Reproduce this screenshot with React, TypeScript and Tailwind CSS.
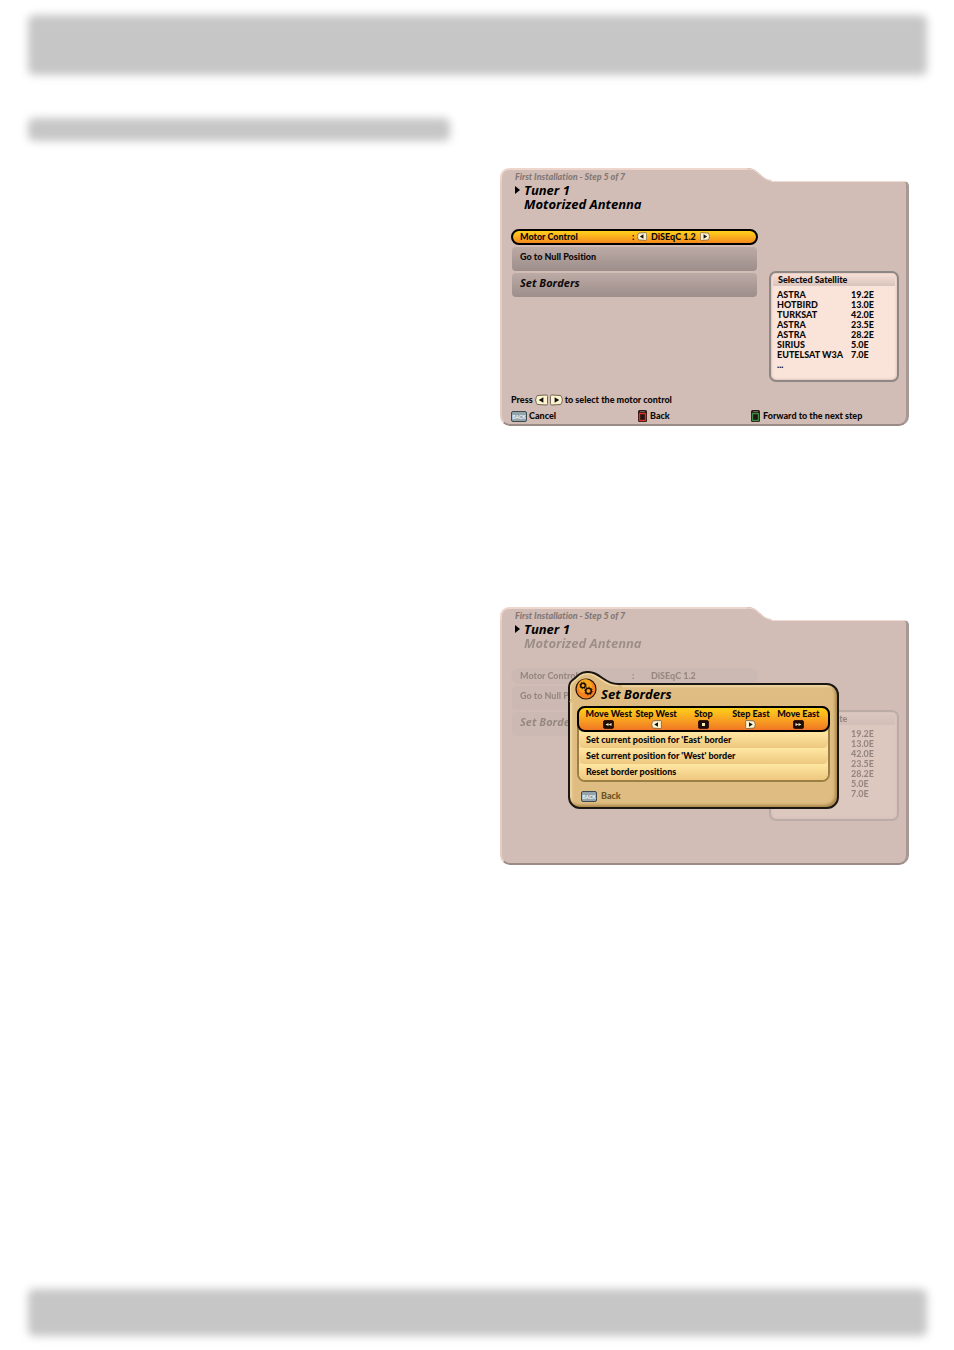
import type { ReactNode } from "react";

const satellites = [
  ["ASTRA", "19.2E"],
  ["HOTBIRD", "13.0E"],
  ["TURKSAT", "42.0E"],
  ["ASTRA", "23.5E"],
  ["ASTRA", "28.2E"],
  ["SIRIUS", "5.0E"],
  ["EUTELSAT W3A", "7.0E"],
];

function KeyIcon({ dir, className }: { dir: "left" | "right"; className: string }) {
  return (
    <svg viewBox="0 0 14 12" className={`block shrink-0 ${className}`} aria-hidden="true">
      <g transform={dir === "left" ? undefined : "matrix(-1 0 0 1 14 0)"}>
        <path d="M2.500 1.200L12 0.600q1.500 0 1.500 1.500v7.800q0 1.500-1.500 1.500L2.500 10.800Q1.200 9 0.600 6Q1.200 3 2.500 1.200z" fill="#fdf3cf" stroke="#6b5a4a" strokeWidth="1" />
        <path d="M9 3v6L4 6z" fill="#111" />
      </g>
    </svg>
  );
}

function BackKey() {
  return (
    <svg viewBox="0 0 16 11" className="block h-[11px] w-4 shrink-0" aria-hidden="true">
      <rect x="0.500" y="0.500" width="15" height="10" rx="1.500" fill="#94a4aa" stroke="#3f4b50" />
      <text x="8" y="7.500" textAnchor="middle" fontSize="5" fontWeight="700" fill="#f4f9fb">
        BACK
      </text>
    </svg>
  );
}

function ColorKey({ color }: { color: string }) {
  return (
    <svg viewBox="0 0 9 12" className="block h-3 w-[9px] shrink-0" aria-hidden="true">
      <rect x="0" y="0" width="9" height="12" rx="1.500" fill="#2a1a17" />
      <rect x="1.500" y="3.500" width="6" height="7" rx="0.500" fill="#221512" stroke={color} strokeWidth="1.400" />
      <path d="M2 1.500h5" stroke="#6d5f5a" strokeWidth="1" />
    </svg>
  );
}

function DarkKey({ kind }: { kind: "rew" | "stop" | "fwd" }) {
  return (
    <svg viewBox="0 0 11 9" className="block h-[9px] w-[11px]" aria-hidden="true">
      <rect x="0.500" y="0.500" width="10" height="8" rx="1.500" fill="#1c0d08" stroke="#3c1606" />
      {kind === "stop" && <rect x="4" y="3" width="3" height="3" fill="#fbe9c0" />}
      {kind === "rew" && <path d="M5.500 3v3L2.500 4.500zM8.500 3v3L5.500 4.500z" fill="#fbe9c0" />}
      {kind === "fwd" && <path d="M5.500 3v3l3-1.500zM2.500 3v3l3-1.500z" fill="#fbe9c0" />}
    </svg>
  );
}

function GreyBar({ className }: { className: string }) {
  return (
    <div className={`flex p-1 ${className}`}>
      <div className="flex-1 rounded-[6px] bg-[#c6c6c6] blur-[4px]" />
    </div>
  );
}

function FolderBackdrop() {
  return (
    <div className="col-start-1 row-start-1 flex flex-col">
      <div className="flex h-[13px]">
        <div className="w-[247px] rounded-tl-[9px] border-t-2 border-l-2 border-[#efd6cc] bg-[#d1bdb6]" />
        <svg viewBox="0 0 25 13" className="block h-[13px] w-[25px]" aria-hidden="true">
          <path d="M0 0C6 0 8 1.500 12 5S19 12 25 12V13H0z" fill="#d1bdb6" />
          <path d="M0 1C6 1 8 2.500 12 6S19 12.500 25 12.500" fill="none" stroke="#eed8cf" strokeWidth="1" />
        </svg>
      </div>
      <div className="flex flex-1">
        <div className="w-[271px] rounded-bl-[10px] border-b-2 border-l-2 border-b-[#9a8b87] border-l-[#e6cdc3] bg-[#d1bdb6]" />
        <div className="flex-1 rounded-tr-[5px] rounded-br-[10px] border-t border-r-3 border-b-2 border-t-[#efd9d0] border-r-[#a89995] border-b-[#9a8b87] bg-[#d1bdb6]" />
      </div>
    </div>
  );
}

function MenuRow({ dim, italic, children }: { dim: boolean; italic?: boolean; children: ReactNode }) {
  return (
    <button
      className={`mx-px flex h-6 items-center rounded-[4px] px-2 pb-1 text-left ${
        italic ? "font-['Open_Sans',sans-serif] text-[11px] font-bold italic" : "text-[9px]"
      } ${dim ? "bg-[#c2b2ad]" : "bg-linear-to-b from-[#bcaaa5] to-[#9d8e8b]"}`}
    >
      {children}
    </button>
  );
}

function SatelliteBox({ dim }: { dim: boolean }) {
  return (
    <section className="mt-[42px] h-[111px] w-[130px] rounded-[7px] border-2 border-[#8d8785] bg-[#fae4da] px-[6px] shadow-[inset_0_0_3px_#c9a79a]">
      <h3 className="-mx-1 mt-px h-3 bg-linear-to-b from-[#f7dfd5] to-[#d9c4bd] px-1 pl-[5px] text-[9px] leading-3">
        Selected Satellite
      </h3>
      <table className="mt-1 w-full text-[9px] leading-[10px]">
        <tbody>
          {satellites.map(([name, pos]) => (
            <tr key={name + pos}>
              <td className="w-[74px] p-0 whitespace-nowrap">{dim ? "" : name}</td>
              <td className="p-0">{pos}</td>
            </tr>
          ))}
          {!dim && (
            <tr>
              <td className="p-0">...</td>
            </tr>
          )}
        </tbody>
      </table>
    </section>
  );
}

function Screen({ dim = false, children }: { dim?: boolean; children?: ReactNode }) {
  return (
    <article className="relative grid min-h-[258px] w-[409px] font-['Lato',sans-serif] font-black text-[#0d0908] [font-variant-ligatures:none]">
      <FolderBackdrop />
      <div className="col-start-1 row-start-1 flex flex-col pr-[10px] pb-1 pl-[11px]">
        <header className="pt-[3px] pl-1 font-['Open_Sans',sans-serif] italic">
          <p className="font-['Lato',sans-serif] text-[9px] leading-3 font-black text-[#857874]">
            First Installation - Step 5 of 7
          </p>
          <h1 className="flex items-center text-[13px] leading-[14px] font-bold text-black">
            <svg viewBox="0 0 5 8" className="mr-1 h-2 w-[5px]" aria-hidden="true">
              <path d="M0 0l5 4-5 4z" fill="#000" />
            </svg>
            Tuner 1
          </h1>
          <h2 className={`pl-[9px] text-[13px] leading-[14px] font-bold text-black ${dim ? "opacity-25" : ""}`}>
            Motorized Antenna
          </h2>
        </header>
        <div className={`mt-[18px] flex justify-between ${dim ? "opacity-30" : ""}`}>
          <div className="flex w-[247px] flex-col gap-[2px]">
            <div
              className={`flex h-4 items-center rounded-full pb-px text-[9px] ${
                dim
                  ? "bg-[#c2b2ad] px-[9px]"
                  : "border-2 border-black bg-linear-to-b from-[#ffd21c] to-[#f48a1c] px-[7px]"
              }`}
            >
              <span className="w-[112px]">Motor Control</span>
              <span className="w-[5px]">:</span>
              <button aria-label="Previous motor control" className={dim ? "invisible" : ""}>
                <KeyIcon dir="left" className="h-[9px] w-[10px]" />
              </button>
              <span className="mx-1">DiSEqC 1.2</span>
              <button aria-label="Next motor control" className={dim ? "invisible" : ""}>
                <KeyIcon dir="right" className="h-[9px] w-[10px]" />
              </button>
            </div>
            <MenuRow dim={dim}>Go to Null Position</MenuRow>
            <MenuRow dim={dim} italic>
              Set Borders
            </MenuRow>
          </div>
          <SatelliteBox dim={dim} />
        </div>
        {!dim && (
          <footer className="mt-auto text-[9px] leading-3">
            <p className="flex items-center gap-[2px]">
              Press
              <KeyIcon dir="left" className="h-3 w-[13px]" />
              <KeyIcon dir="right" className="h-3 w-[13px]" />
              to select the motor control
            </p>
            <div className="mt-1 flex items-center">
              <button className="flex w-[127px] items-center gap-[2px]">
                <BackKey />
                Cancel
              </button>
              <button className="flex w-[113px] items-center gap-[3px]">
                <ColorKey color="#d8322a" />
                Back
              </button>
              <button className="flex items-center gap-[3px]">
                <ColorKey color="#3c8a48" />
                Forward to the next step
              </button>
            </div>
          </footer>
        )}
      </div>
      {children}
    </article>
  );
}

const actions = [
  { label: "Move West", icon: <DarkKey kind="rew" /> },
  { label: "Step West", icon: <KeyIcon dir="left" className="h-[9px] w-[11px]" /> },
  { label: "Stop", icon: <DarkKey kind="stop" /> },
  { label: "Step East", icon: <KeyIcon dir="right" className="h-[9px] w-[11px]" /> },
  { label: "Move East", icon: <DarkKey kind="fwd" /> },
];

const borderOptions = [
  "Set current position for 'East' border",
  "Set current position for 'West' border",
  "Reset border positions",
];

function BordersDialog() {
  return (
    <div role="dialog" aria-label="Set Borders" className="absolute top-[76px] left-[68px] w-[271px]">
      <div className="rounded-[12px] border-2 border-[#1c1712] bg-[#dfbd82] px-[7px] pb-1 shadow-[inset_-2px_-2px_3px_#a98648,inset_2px_2px_2px_#f0d7a4]">
        <h2 className="h-[21px] pl-6 font-['Open_Sans',sans-serif] text-[13px] leading-[18px] font-bold text-black italic">
          Set Borders
        </h2>
        <div className="rounded-[8px] border-2 border-[#9b7f45] bg-[#fbdc93]">
          <div className="-mx-[2px] -mt-[2px] grid h-[26px] grid-cols-5 rounded-[8px] border-2 border-black bg-linear-to-b from-[#fdd017] to-[#f07624] px-[6px]">
            {actions.map((a) => (
              <button key={a.label} className="flex flex-col items-center text-[9px] leading-3 whitespace-nowrap">
                {a.label}
                {a.icon}
              </button>
            ))}
          </div>
          {borderOptions.map((o) => (
            <button
              key={o}
              className="block h-4 w-full rounded-b-[6px] bg-linear-to-b from-[#ffe7a2] to-[#edc77f] px-[7px] text-left text-[9px] leading-[14px]"
            >
              {o}
            </button>
          ))}
        </div>
        <button className="mt-2 ml-1 flex items-center gap-1 pb-px text-[9px] leading-3 text-[#6d5423]">
          <BackKey />
          Back
        </button>
      </div>
      <svg viewBox="0 0 56 34" className="absolute -top-3 left-0 h-[34px] w-14" aria-hidden="true">
        <path d="M1 30V16Q1 11 6 8L12 3Q19-1 27 2C35 6 39 13 50 13H54V17H22L3 32z" fill="#dfbd82" />
        <path d="M2.500 28V17Q2.500 13 7 9.500L12 5Q19 1 26 4C34 8 39 15 50 15" fill="none" stroke="#f0d7a4" strokeWidth="1.500" />
        <path d="M1 30V16Q1 11 6 8L11 3.500Q18-1 27 2.500C35 6 39 13 50 13H56" fill="none" stroke="#1c1712" strokeWidth="2" />
        <circle cx="18" cy="18" r="10" fill="#f58220" stroke="#2b1206" strokeWidth="1.200" />
        <circle cx="17" cy="15" r="7" fill="#fcb61c" opacity="0.700" />
        <circle cx="15" cy="14.500" r="2.300" fill="none" stroke="#1c0d04" strokeWidth="1.500" />
        <circle cx="15" cy="14.500" r="3.300" fill="none" stroke="#1c0d04" strokeWidth="0.800" strokeDasharray="1.200 1.400" />
        <circle cx="20.500" cy="20" r="2.800" fill="none" stroke="#1c0d04" strokeWidth="1.600" />
        <circle cx="20.500" cy="20" r="3.900" fill="none" stroke="#1c0d04" strokeWidth="0.800" strokeDasharray="1.400 1.600" />
      </svg>
    </div>
  );
}

export default function App() {
  return (
    <div className="flex min-h-screen flex-col bg-white pt-[11px] pr-[23px] pb-[10px] pl-6">
      <GreyBar className="h-[68px]" />
      <GreyBar className="mt-[35px] h-[31px] w-[430px]" />
      <main className="mt-[23px] flex flex-col items-end gap-[181px] pr-[22px]">
        <Screen />
        <Screen dim>
          <BordersDialog />
        </Screen>
      </main>
      <GreyBar className="mt-auto h-[55px]" />
    </div>
  );
}
